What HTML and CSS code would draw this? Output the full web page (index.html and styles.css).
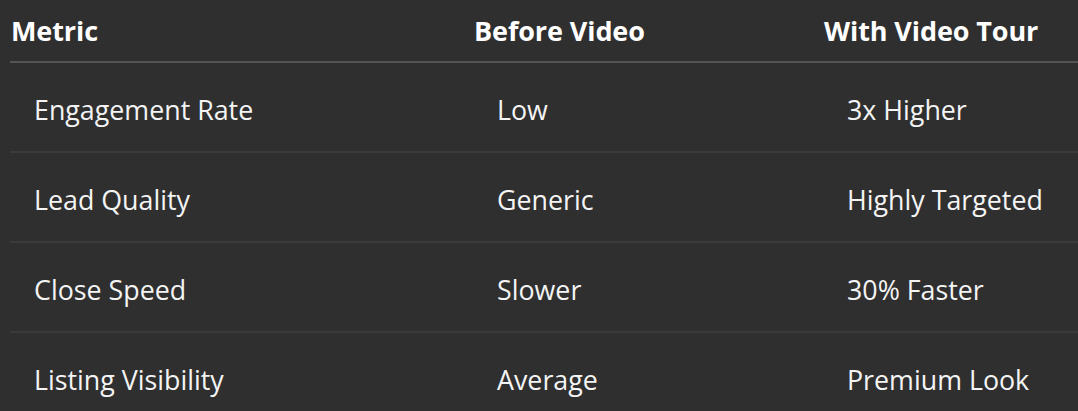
FILE: index.html
```html
<!DOCTYPE html>
<html lang="en">
<head>
<meta charset="utf-8">
<title>Video Tour Metrics</title>
<link rel="stylesheet" href="styles.css">
</head>
<body>
<div class="wrap">
<table class="metrics">
  <thead>
    <tr>
      <th class="c1">Metric</th>
      <th class="c2">Before Video</th>
      <th class="c3">With Video Tour</th>
    </tr>
  </thead>
  <tbody>
    <tr><td>Engagement Rate</td><td>Low</td><td>3x Higher</td></tr>
    <tr><td>Lead Quality</td><td>Generic</td><td>Highly Targeted</td></tr>
    <tr><td>Close Speed</td><td>Slower</td><td>30% Faster</td></tr>
    <tr><td>Listing Visibility</td><td>Average</td><td>Premium Look</td></tr>
  </tbody>
</table>
</div>
</body>
</html>
```

FILE: styles.css
```css
html, body {
  margin: 0;
  padding: 0;
  background: #2f2f2f;
  overflow: hidden;
}
.wrap {
  padding-left: 10px;
  width: 1200px;
}
.metrics {
  border-collapse: collapse;
  width: 1100px;
  table-layout: fixed;
  font-family: "Open Sans", "Noto Sans", sans-serif;
  color: #ffffff;
}
.metrics th {
  text-align: left;
  font-weight: 700;
  font-size: 27px;
  height: 61px;
  padding: 0 0 0 1px;
  vertical-align: middle;
  border-bottom: 2px solid #555555;
  letter-spacing: -0.1px;
}
.c1 { width: 462px; }
.c2 { width: 349px; }
.c3 { width: auto; }
.metrics td {
  font-size: 26.8px;
  height: 90px;
  padding: 5px 0 0 24px;
  box-sizing: border-box;
  vertical-align: middle;
  border-bottom: 2px solid #3a3a3a;
  color: #f4f4f4;
}
```
